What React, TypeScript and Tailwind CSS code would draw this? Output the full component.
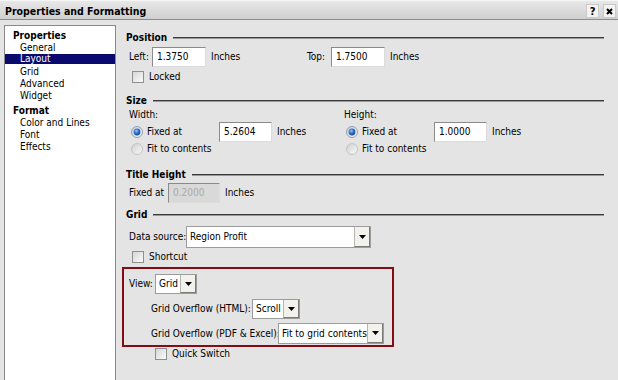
import React from 'react';

// small 3D-ish widgets used by the dialog
const Checkbox = () => (
  <span className="block w-[12px] h-[12px] border border-[#8e8f8f] bg-linear-to-br from-[#d6d6d6] to-[#fbfbfb]" />
);

const Radio = ({ on = false }: { on?: boolean }) => (
  <svg width="12" height="12" viewBox="0 0 12 12" className="block">
    <defs>
      <radialGradient id="rOn" cx="0.4" cy="0.35" r="0.7">
        <stop offset="0" stopColor="#9cc6f5" />
        <stop offset="0.5" stopColor="#2e6fd0" />
        <stop offset="1" stopColor="#17408c" />
      </radialGradient>
      <linearGradient id="rOff" x1="0" y1="0" x2="1" y2="1">
        <stop offset="0" stopColor="#cfcfcf" />
        <stop offset="1" stopColor="#fafafa" />
      </linearGradient>
    </defs>
    <circle cx="6" cy="6" r="5.5" fill="url(#rOff)" stroke={on ? '#8aa0b8' : '#c4c4c4'} />
    {on && <circle cx="6" cy="6" r="3.4" fill="url(#rOn)" />}
  </svg>
);

const Field = ({ value, className, disabled = false }: { value: string; className: string; disabled?: boolean }) => (
  <div
    className={`h-[20px] flex items-center pl-[4px] border border-t-[#8a8a8a] border-l-[#8a8a8a] border-r-[#dcdcdc] border-b-[#dcdcdc] ${
      disabled ? 'bg-[#d9d9d9] text-[#a9a9a9]' : 'bg-white'
    } ${className}`}
  >
    {value}
  </div>
);

const Arrow = () => (
  <svg width="7" height="4" viewBox="0 0 7 4" className="block">
    <path d="M0 0h7L3.5 4z" fill="#000" />
  </svg>
);

const Select = ({ value, className }: { value: string; className: string }) => (
  <div className={`flex border border-[#9c9c9c] bg-white ${className}`}>
    <div className="flex-1 flex items-center pl-[3px] whitespace-nowrap overflow-hidden">{value}</div>
    <div className="w-[16px] flex items-center justify-center bg-[#f2f1eb] border-l border-l-[#b5b5b5] border-r border-r-[#7a7a7a] border-b border-b-[#7a7a7a]">
      <Arrow />
    </div>
  </div>
);

const Section = ({ title, className }: { title: string; className: string }) => (
  <div className={`flex items-center h-[14px] pl-[4px] ${className}`}>
    <span className="font-bold whitespace-nowrap">{title}</span>
    <div className="flex-1 ml-[6px] h-[2px] border-t border-t-[#3a3a3a] border-b border-b-[#9a9a9a]" />
  </div>
);

const navItems = [
  { group: 'Properties', items: ['General', 'Layout', 'Grid', 'Advanced', 'Widget'] },
  { group: 'Format', items: ['Color and Lines', 'Font', 'Effects'] },
];

function Nav() {
  return (
    <div className="mt-[5px] ml-[4px] w-[112px] border border-[#8a8a8a] border-b-0 bg-white pt-[4px]">
      {navItems.map((g, i) => (
        <div key={g.group} className={i > 0 ? 'mt-[3px]' : ''}>
          <div className="h-[12px] leading-[12px] pl-[8px] font-bold">{g.group}</div>
          {g.items.map((it) =>
            it === 'Layout' ? (
              <div key={it} className="h-[10px] leading-[10px] mb-[2px] pl-[15px] bg-[#0a0a6e] text-white">
                {it}
              </div>
            ) : (
              <div key={it} className="h-[12px] leading-[12px] pl-[15px]">
                {it}
              </div>
            )
          )}
        </div>
      ))}
    </div>
  );
}

export default function App() {
  return (
    <div className="w-[618px] h-[380px] overflow-hidden bg-[#e4e4e4] text-[10px] leading-none text-black whitespace-nowrap font-['DejaVu_Sans_Condensed','DejaVu_Sans',sans-serif]">
      {/* title bar */}
      <div className="h-[20px] flex items-center pt-[2px] pl-[5px] pr-[2px] border-t border-t-[#f6f6f6] border-b border-b-[#8c8c8c] bg-linear-to-b from-[#e8e8e8] to-[#cfcfcf]">
        <span className="flex-1 font-bold text-[10.5px]">Properties and Formatting</span>
        <div className="flex gap-[4px]">
          <span className="w-[13px] h-[14px] flex items-center justify-center bg-[#f3f3f3] border border-[#c9c9c9] font-bold text-[11px]">?</span>
          <span className="w-[13px] h-[14px] flex items-center justify-center bg-[#f3f3f3] border border-[#c9c9c9]">
            <svg width="7" height="7" viewBox="0 0 7 7">
              <path d="M1 1l5 5M6 1L1 6" stroke="#000" strokeWidth="2" />
            </svg>
          </span>
        </div>
      </div>

      <div className="flex h-[360px]">
        <Nav />

        <div className="ml-[6px] w-[482px] flex flex-col">
          {/* Position */}
          <Section title="Position" className="mt-[11px]" />
          <div className="mt-[2px] h-[20px] flex items-center pl-[7px]">
            <div className="w-[178px] flex items-center">
              <span className="w-[23px]">Left:</span>
              <Field value="1.3750" className="w-[54px]" />
              <span className="ml-[5px]">Inches</span>
            </div>
            <span className="w-[24px]">Top:</span>
            <Field value="1.7500" className="w-[54px]" />
            <span className="ml-[5px]">Inches</span>
          </div>
          <div className="mt-[3px] h-[14px] flex items-center pl-[10px]">
            <Checkbox />
            <span className="ml-[5px]">Locked</span>
          </div>

          {/* Size */}
          <Section title="Size" className="mt-[10px]" />
          <div className="h-[14px] flex items-center pl-[7px]">
            <span className="w-[215px]">Width:</span>
            <span>Height:</span>
          </div>
          <div className="h-[20px] flex items-center pl-[7px]">
            {[
              { v: '5.2604', w: 'w-[215px]' },
              { v: '1.0000', w: '' },
            ].map((c) => (
              <div key={c.v} className={`flex items-center ${c.w}`}>
                <span className="ml-[2px]">
                  <Radio on />
                </span>
                <span className="ml-[4px] w-[72px]">Fixed at</span>
                <Field value={c.v} className="w-[53px]" />
                <span className="ml-[5px]">Inches</span>
              </div>
            ))}
          </div>
          <div className="h-[14px] flex items-center pl-[7px]">
            <div className="w-[215px] flex items-center">
              <span className="ml-[2px]">
                <Radio />
              </span>
              <span className="ml-[4px]">Fit to contents</span>
            </div>
            <div className="flex items-center">
              <span className="ml-[2px]">
                <Radio />
              </span>
              <span className="ml-[4px]">Fit to contents</span>
            </div>
          </div>

          {/* Title Height */}
          <Section title="Title Height" className="mt-[12px]" />
          <div className="mt-[1px] h-[20px] flex items-center pl-[7px]">
            <span className="w-[39px]">Fixed at</span>
            <Field value="0.2000" className="w-[52px]" disabled />
            <span className="ml-[5px]">Inches</span>
          </div>

          {/* Grid */}
          <Section title="Grid" className="mt-[5px]" />
          <div className="mt-[4px] h-[22px] flex items-center pl-[7px]">
            <span className="w-[57px] shrink-0">Data source:</span>
            <Select value="Region Profit" className="w-[185px] h-[22px]" />
          </div>
          <div className="mt-[2px] h-[14px] flex items-center pl-[10px]">
            <Checkbox />
            <span className="ml-[5px]">Shortcut</span>
          </div>

          <div className="mt-[3px] w-[272px] h-[80px] border-2 border-[#850c12] pt-[5px]">
            <div className="h-[20px] flex items-center pl-[5px]">
              <span className="w-[26px]">View:</span>
              <Select value="Grid" className="w-[42px] h-[20px]" />
            </div>
            <div className="mt-[5px] h-[20px] flex items-center pl-[27px]">
              <span className="w-[101px]">Grid Overflow (HTML):</span>
              <Select value="Scroll" className="w-[48px] h-[20px]" />
            </div>
            <div className="mt-[4px] h-[21px] flex items-center pl-[27px]">
              <span className="w-[127px]">Grid Overflow (PDF &amp; Excel):</span>
              <Select value="Fit to grid contents" className="w-[106px] h-[21px]" />
            </div>
          </div>
          <div className="h-[14px] flex items-center pl-[33px]">
            <Checkbox />
            <span className="ml-[5px]">Quick Switch</span>
          </div>
        </div>
      </div>
    </div>
  );
}
